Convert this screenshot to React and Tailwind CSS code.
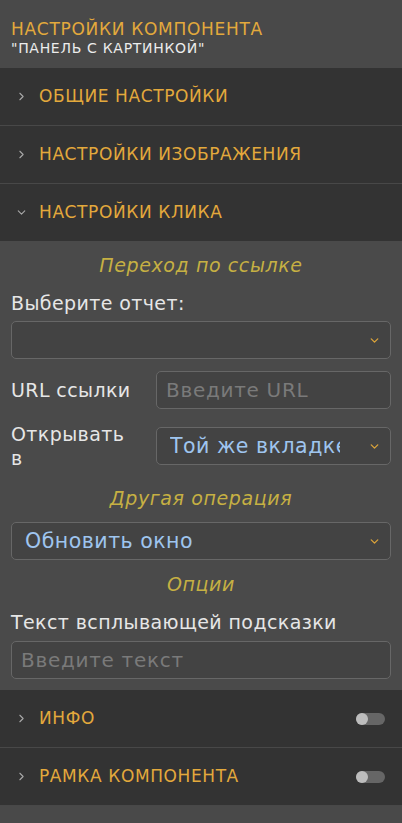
import { ChevronRight, ChevronDown } from 'lucide-react'

const font = { fontFamily: '"DejaVu Sans", sans-serif' }

function Row({ title, open, toggle }) {
  return (
    <div className="flex items-center h-[58px] pl-[15px] pr-[17px] bg-[#333333] border-b border-[#484848]">
      {open ? (
        <ChevronDown size={13} strokeWidth={2} className="text-[#a8a8a8]" />
      ) : (
        <ChevronRight size={13} strokeWidth={2} className="text-[#a8a8a8]" />
      )}
      <span className="ml-[11px] text-[17px] tracking-[0.6px] text-[#e3a93c]">{title}</span>
      {toggle && (
        <div className="ml-auto relative w-[29px] h-[12px] rounded-full bg-[#666666]">
          <div className="absolute left-0 top-0 w-[12px] h-[12px] rounded-full bg-[#bdbdbd]" />
        </div>
      )}
    </div>
  )
}

function Select({ value }) {
  return (
    <div className="flex items-center h-[38px] rounded-[5px] border border-[#676767] bg-[#434343] pl-[13px] pr-[9px] overflow-hidden">
      <span className="flex-1 min-w-0 text-[20.5px] tracking-[0.5px] text-[#9fc5ef] whitespace-nowrap overflow-hidden">{value}</span>
      <ChevronDown size={13} strokeWidth={2.5} className="text-[#d9a23a] shrink-0 ml-[28px]" />
    </div>
  )
}

function Input({ placeholder }) {
  return (
    <div className="flex items-center h-[38px] rounded-[5px] border border-[#676767] bg-[#434343] px-[9px] overflow-hidden">
      <span className="text-[20px] tracking-[0.7px] text-[#7a7a7a] whitespace-nowrap">{placeholder}</span>
    </div>
  )
}

function Caption({ children }) {
  return <div className="text-center italic text-[19px] leading-[24px] tracking-[0.6px] text-[#c6b043]">{children}</div>
}

export default function App() {
  return (
    <div style={font} className="w-[402px] h-[823px] bg-[#494949] overflow-hidden">
      <div className="h-[68px] pt-[19px] pl-[11px] bg-[#494949]">
        <div className="text-[17px] leading-[20px] tracking-[0.7px] text-[#e3a93c]">НАСТРОЙКИ КОМПОНЕНТА</div>
        <div className="text-[14px] leading-[18px] tracking-[0.7px] text-[#ececec]">"ПАНЕЛЬ С КАРТИНКОЙ"</div>
      </div>
      <Row title="ОБЩИЕ НАСТРОЙКИ" />
      <Row title="НАСТРОЙКИ ИЗОБРАЖЕНИЯ" />
      <Row title="НАСТРОЙКИ КЛИКА" open />
      <div className="bg-[#4a4a4a] px-[11px] pt-[12px] pb-[11px] -mt-px text-[#e6e6e6] text-[19px] tracking-[0.4px]">
        <Caption>Переход по ссылке</Caption>
        <div className="mt-[14px] leading-[24px]">Выберите отчет:</div>
        <div className="mt-[6px]">
          <Select value="" />
        </div>
        <div className="mt-[12px] flex items-center">
          <div className="w-[145px] shrink-0 leading-[24px]">URL ссылки</div>
          <div className="flex-1 min-w-0">
            <Input placeholder="Введите URL" />
          </div>
        </div>
        <div className="mt-[13px] flex items-center">
          <div className="w-[145px] shrink-0 leading-[24px]">Открывать<br />в</div>
          <div className="flex-1 min-w-0">
            <Select value="Той же вкладке" />
          </div>
        </div>
        <div className="mt-[16px]">
          <Caption>Другая операция</Caption>
        </div>
        <div className="mt-[12px]">
          <Select value="Обновить окно" />
        </div>
        <div className="mt-[12px]">
          <Caption>Опции</Caption>
        </div>
        <div className="mt-[14px] leading-[24px]">Текст всплывающей подсказки</div>
        <div className="mt-[7px]">
          <Input placeholder="Введите текст" />
        </div>
      </div>
      <Row title="ИНФО" toggle />
      <Row title="РАМКА КОМПОНЕНТА" toggle />
    </div>
  )
}
